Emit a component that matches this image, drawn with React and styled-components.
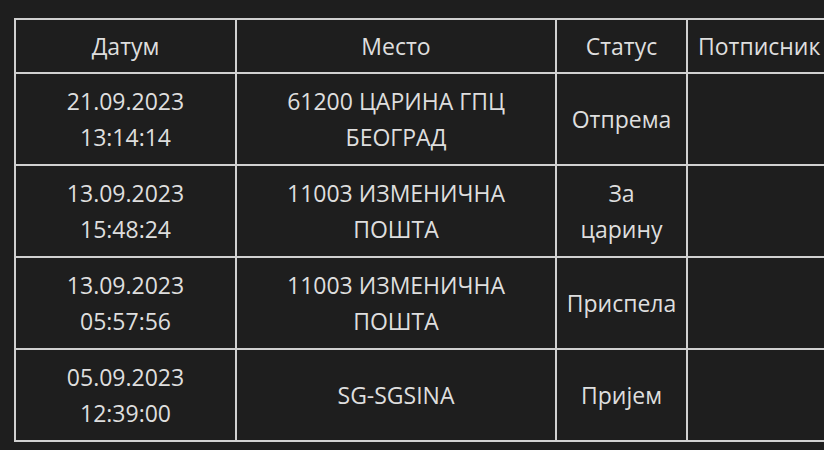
import React from 'react';
import styled, { createGlobalStyle } from 'styled-components';

const GlobalStyle = createGlobalStyle`
  html, body {
    margin: 0;
    padding: 0;
    background-color: #1e1e1e;
    overflow: hidden;
  }
`;

const Page = styled.div`
  padding: 18px 0 0 14px;
  width: 824px;
  height: 450px;
  box-sizing: border-box;
  font-family: "Open Sans", "Noto Sans", sans-serif;
  color: #dedede;
`;

const Table = styled.table`
  border-collapse: collapse;
  table-layout: fixed;
  width: 814px;
`;

const Cell = styled.td`
  border: 2px solid #d0d0d0;
  padding: 9px 8px;
  font-size: 23px;
  line-height: 36px;
  text-align: center;
  vertical-align: middle;
  font-weight: 400;
`;

const HeadCell = styled(Cell).attrs({ as: 'th' })`
  padding: 8px 10px;
  white-space: nowrap;
  text-align: ${p => (p.$left ? 'left' : 'center')};
`;

const columns = [
  { title: 'Датум', width: 221 },
  { title: 'Место', width: 320 },
  { title: 'Статус', width: 131 },
  { title: 'Потписник', width: 142, left: true },
];

const rows = [
  { date: '21.09.2023', time: '13:14:14', place: '61200 ЦАРИНА ГПЦ БЕОГРАД', status: 'Отпрема' },
  { date: '13.09.2023', time: '15:48:24', place: '11003 ИЗМЕНИЧНА ПОШТА', status: 'За царину' },
  { date: '13.09.2023', time: '05:57:56', place: '11003 ИЗМЕНИЧНА ПОШТА', status: 'Приспела' },
  { date: '05.09.2023', time: '12:39:00', place: 'SG-SGSINA', status: 'Пријем' },
];

export default function App() {
  return (
    <Page>
      <GlobalStyle />
      <Table>
        <colgroup>
          {columns.map(c => <col key={c.title} style={{ width: c.width }} />)}
        </colgroup>
        <thead>
          <tr>
            {columns.map(c => (
              <HeadCell key={c.title} $left={c.left}>{c.title}</HeadCell>
            ))}
          </tr>
        </thead>
        <tbody>
          {rows.map((r, i) => (
            <tr key={i}>
              <Cell>{r.date}<br />{r.time}</Cell>
              <Cell>{r.place}</Cell>
              <Cell>{r.status}</Cell>
              <Cell></Cell>
            </tr>
          ))}
        </tbody>
      </Table>
    </Page>
  );
}
